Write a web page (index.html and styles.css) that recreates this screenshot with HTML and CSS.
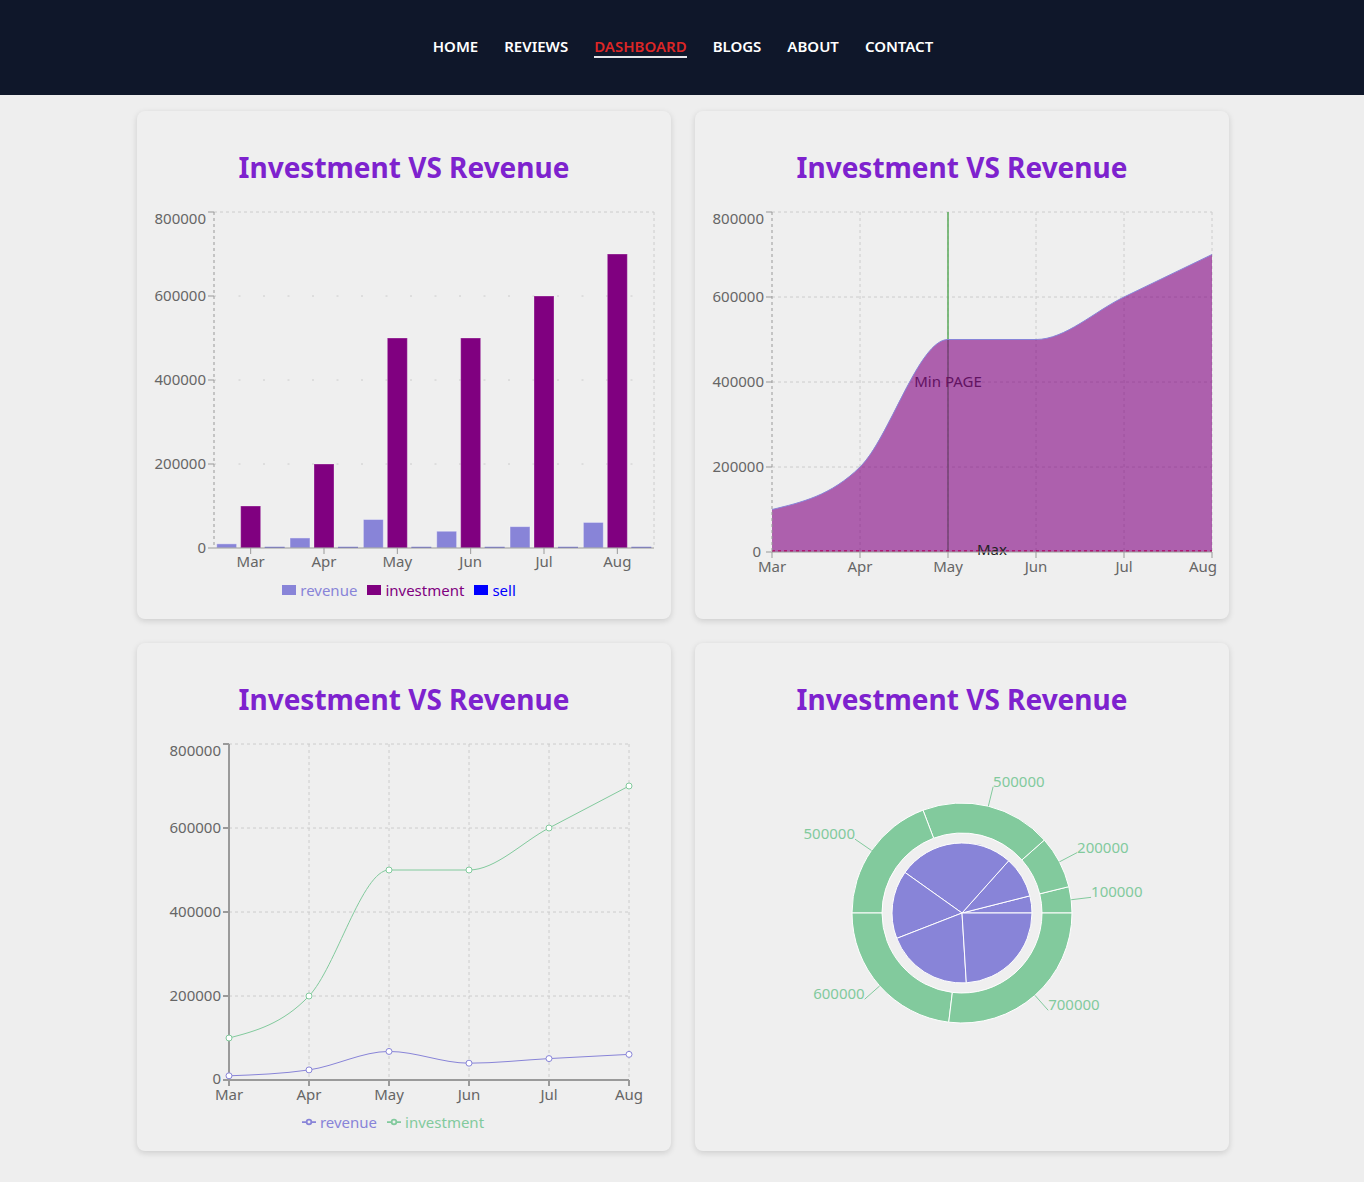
FILE: index.html
```html
<!DOCTYPE html>
<html lang="en">
<head>
<meta charset="utf-8">
<title>Dashboard</title>
<link rel="stylesheet" href="styles.css">
</head>
<body>
<header class="header">
  <nav class="nav">
    <a class="nav-link" href="#">HOME</a>
    <a class="nav-link" href="#">REVIEWS</a>
    <a class="nav-link active" href="#">DASHBOARD</a>
    <a class="nav-link" href="#">BLOGS</a>
    <a class="nav-link" href="#">ABOUT</a>
    <a class="nav-link" href="#">CONTACT</a>
  </nav>
</header>

<main class="grid">
  <!-- Bar chart -->
  <section class="card">
    <h2 class="card-title">Investment VS Revenue</h2>
    <svg class="chart" width="534" height="388" viewBox="0 0 534 388">
      <g class="grid-lines">
        <line x1="77" y1="25" x2="517" y2="25"/>
        <line class="sparse" x1="77" y1="109" x2="517" y2="109"/>
        <line class="sparse" x1="77" y1="193" x2="517" y2="193"/>
        <line class="sparse" x1="77" y1="277" x2="517" y2="277"/>
        <line x1="517" y1="25" x2="517" y2="361"/>
      </g>
      <g class="bars-rev">
        <rect x="79.67" y="356.8" width="20" height="4.2"/>
        <rect x="153" y="350.92" width="20" height="10.08"/>
        <rect x="226.33" y="332.44" width="20" height="28.56"/>
        <rect x="299.67" y="344.2" width="20" height="16.8"/>
        <rect x="373" y="339.58" width="20" height="21.42"/>
        <rect x="446.33" y="335.38" width="20" height="25.62"/>
      </g>
      <g class="bars-inv">
        <rect x="103.67" y="319" width="20" height="42"/>
        <rect x="177" y="277" width="20" height="84"/>
        <rect x="250.33" y="151" width="20" height="210"/>
        <rect x="323.67" y="151" width="20" height="210"/>
        <rect x="397" y="109" width="20" height="252"/>
        <rect x="470.33" y="67" width="20" height="294"/>
      </g>
      <g class="bars-sell">
        <rect x="127.67" y="359.8" width="20" height="1.2"/>
        <rect x="201" y="359.8" width="20" height="1.2"/>
        <rect x="274.33" y="359.8" width="20" height="1.2"/>
        <rect x="347.67" y="359.8" width="20" height="1.2"/>
        <rect x="421" y="359.8" width="20" height="1.2"/>
        <rect x="494.33" y="359.8" width="20" height="1.2"/>
      </g>
      <g class="axis">
        <line class="dashed" x1="77" y1="25" x2="77" y2="361"/>
        <line x1="71" y1="25" x2="77" y2="25"/>
        <line x1="71" y1="109" x2="77" y2="109"/>
        <line x1="71" y1="193" x2="77" y2="193"/>
        <line x1="71" y1="277" x2="77" y2="277"/>
        <line x1="71" y1="361" x2="77" y2="361"/>
        <line x1="77" y1="361" x2="517" y2="361"/>
        <line x1="113.67" y1="361" x2="113.67" y2="367"/>
        <line x1="187" y1="361" x2="187" y2="367"/>
        <line x1="260.33" y1="361" x2="260.33" y2="367"/>
        <line x1="333.67" y1="361" x2="333.67" y2="367"/>
        <line x1="407" y1="361" x2="407" y2="367"/>
        <line x1="480.33" y1="361" x2="480.33" y2="367"/>
      </g>
      <g class="ticks-y">
        <text x="69" y="37">800000</text>
        <text x="69" y="114">600000</text>
        <text x="69" y="198">400000</text>
        <text x="69" y="282">200000</text>
        <text x="69" y="366">0</text>
      </g>
      <g class="ticks-x">
        <text x="113.67" y="380">Mar</text>
        <text x="187" y="380">Apr</text>
        <text x="260.33" y="380">May</text>
        <text x="333.67" y="380">Jun</text>
        <text x="407" y="380">Jul</text>
        <text x="480.33" y="380">Aug</text>
      </g>
    </svg>
    <div class="legend legend-bar">
      <span class="legend-item rev"><span class="swatch"></span>revenue</span>
      <span class="legend-item inv"><span class="swatch"></span>investment</span>
      <span class="legend-item sell"><span class="swatch"></span>sell</span>
    </div>
  </section>

  <!-- Area chart -->
  <section class="card">
    <h2 class="card-title">Investment VS Revenue</h2>
    <svg class="chart" width="534" height="432" viewBox="0 0 534 432">
      <g class="grid-lines">
        <line x1="77" y1="25" x2="517" y2="25"/>
        <line x1="77" y1="110" x2="517" y2="110"/>
        <line x1="77" y1="195" x2="517" y2="195"/>
        <line x1="77" y1="280" x2="517" y2="280"/>
        <line x1="165" y1="25" x2="165" y2="365"/>
        <line x1="253" y1="25" x2="253" y2="365"/>
        <line x1="341" y1="25" x2="341" y2="365"/>
        <line x1="429" y1="25" x2="429" y2="365"/>
        <line x1="517" y1="25" x2="517" y2="365"/>
      </g>
      <line class="ref-x" x1="253" y1="25" x2="253" y2="365"/>
      <line class="ref-y" x1="77" y1="364" x2="517" y2="364"/>
      <text class="ref-label" x="253" y="200">Min PAGE</text>
      <path class="area-fill" d="M77,322.5C106.33,315.42,135.67,308.83,165,280C194.33,251.67,223.67,152.5,253,152.5C282.33,152.5,311.67,152.5,341,152.5C370.33,152.5,399.67,124.17,429,110C458.33,95.83,487.67,81.67,517,67.5L517,365L77,365Z"/>
      <path class="area-line" d="M77,322.5C106.33,315.42,135.67,308.83,165,280C194.33,251.67,223.67,152.5,253,152.5C282.33,152.5,311.67,152.5,341,152.5C370.33,152.5,399.67,124.17,429,110C458.33,95.83,487.67,81.67,517,67.5"/>
      <text class="ref-label max" x="297" y="368">Max</text>
      <g class="axis">
        <line class="dashed" x1="77" y1="25" x2="77" y2="365"/>
        <line x1="71" y1="25" x2="77" y2="25"/>
        <line x1="71" y1="110" x2="77" y2="110"/>
        <line x1="71" y1="195" x2="77" y2="195"/>
        <line x1="71" y1="280" x2="77" y2="280"/>
        <line x1="71" y1="365" x2="77" y2="365"/>
        <line x1="77" y1="365" x2="517" y2="365"/>
        <line x1="77" y1="365" x2="77" y2="371"/>
        <line x1="165" y1="365" x2="165" y2="371"/>
        <line x1="253" y1="365" x2="253" y2="371"/>
        <line x1="341" y1="365" x2="341" y2="371"/>
        <line x1="429" y1="365" x2="429" y2="371"/>
        <line x1="517" y1="365" x2="517" y2="371"/>
      </g>
      <g class="ticks-y">
        <text x="69" y="37">800000</text>
        <text x="69" y="115">600000</text>
        <text x="69" y="200">400000</text>
        <text x="69" y="285">200000</text>
        <text x="66" y="370">0</text>
      </g>
      <g class="ticks-x">
        <text x="77" y="385">Mar</text>
        <text x="165" y="385">Apr</text>
        <text x="253" y="385">May</text>
        <text x="341" y="385">Jun</text>
        <text x="429" y="385">Jul</text>
        <text class="end" x="522" y="385">Aug</text>
      </g>
    </svg>
  </section>

  <!-- Line chart -->
  <section class="card">
    <h2 class="card-title">Investment VS Revenue</h2>
    <svg class="chart" width="534" height="388" viewBox="0 0 534 388">
      <g class="grid-lines">
        <line x1="92" y1="25" x2="492" y2="25"/>
        <line x1="92" y1="109" x2="492" y2="109"/>
        <line x1="92" y1="193" x2="492" y2="193"/>
        <line x1="92" y1="277" x2="492" y2="277"/>
        <line x1="172" y1="25" x2="172" y2="361"/>
        <line x1="252" y1="25" x2="252" y2="361"/>
        <line x1="332" y1="25" x2="332" y2="361"/>
        <line x1="412" y1="25" x2="412" y2="361"/>
        <line x1="492" y1="25" x2="492" y2="361"/>
      </g>
      <g class="axis thick">
        <line x1="92" y1="25" x2="92" y2="361"/>
        <line x1="86" y1="25" x2="92" y2="25"/>
        <line x1="86" y1="109" x2="92" y2="109"/>
        <line x1="86" y1="193" x2="92" y2="193"/>
        <line x1="86" y1="277" x2="92" y2="277"/>
        <line x1="86" y1="361" x2="92" y2="361"/>
        <line x1="92" y1="361" x2="492" y2="361"/>
        <line x1="92" y1="361" x2="92" y2="367"/>
        <line x1="172" y1="361" x2="172" y2="367"/>
        <line x1="252" y1="361" x2="252" y2="367"/>
        <line x1="332" y1="361" x2="332" y2="367"/>
        <line x1="412" y1="361" x2="412" y2="367"/>
        <line x1="492" y1="361" x2="492" y2="367"/>
      </g>
      <g class="ticks-y">
        <text x="84" y="37">800000</text>
        <text x="84" y="114">600000</text>
        <text x="84" y="198">400000</text>
        <text x="84" y="282">200000</text>
        <text x="84" y="365">0</text>
      </g>
      <g class="ticks-x">
        <text x="92" y="381">Mar</text>
        <text x="172" y="381">Apr</text>
        <text x="252" y="381">May</text>
        <text x="332" y="381">Jun</text>
        <text x="412" y="381">Jul</text>
        <text x="492" y="381">Aug</text>
      </g>
      <path class="line-rev" d="M92,356.8C118.67,355.82,145.33,354.84,172,350.92C198.67,347,225.33,332.44,252,332.44C278.67,332.44,305.33,344.2,332,344.2C358.67,344.2,385.33,341.05,412,339.58C438.67,338.11,465.33,336.75,492,335.38"/>
      <path class="line-inv" d="M92,319C118.67,312,145.33,305,172,277C198.67,249,225.33,151,252,151C278.67,151,305.33,151,332,151C358.67,151,385.33,123,412,109C438.67,95,465.33,81,492,67"/>
      <g class="dots-rev">
        <circle cx="92" cy="356.8" r="3"/>
        <circle cx="172" cy="350.92" r="3"/>
        <circle cx="252" cy="332.44" r="3"/>
        <circle cx="332" cy="344.2" r="3"/>
        <circle cx="412" cy="339.58" r="3"/>
        <circle cx="492" cy="335.38" r="3"/>
      </g>
      <g class="dots-inv">
        <circle cx="92" cy="319" r="3"/>
        <circle cx="172" cy="277" r="3"/>
        <circle cx="252" cy="151" r="3"/>
        <circle cx="332" cy="151" r="3"/>
        <circle cx="412" cy="109" r="3"/>
        <circle cx="492" cy="67" r="3"/>
      </g>
    </svg>
    <div class="legend legend-line">
      <span class="legend-item rev"><svg class="line-icon" width="14" height="14" viewBox="0 0 32 32"><path d="M0,16h10.667A5.333,5.333,0,1,1,21.333,16H32M21.333,16A5.333,5.333,0,1,1,10.667,16"/></svg>revenue</span>
      <span class="legend-item inv2"><svg class="line-icon" width="14" height="14" viewBox="0 0 32 32"><path d="M0,16h10.667A5.333,5.333,0,1,1,21.333,16H32M21.333,16A5.333,5.333,0,1,1,10.667,16"/></svg>investment</span>
    </div>
  </section>

  <!-- Pie chart -->
  <section class="card">
    <h2 class="card-title">Investment VS Revenue</h2>
    <svg class="chart" width="534" height="432" viewBox="0 0 534 432">
      <g class="pie-inner">
        <path d="M267,194L337,194A70,70,0,0,0,334.87,176.86Z"/>
        <path d="M267,194L334.87,176.86A70,70,0,0,0,313.66,141.81Z"/>
        <path d="M267,194L313.66,141.81A70,70,0,0,0,209.96,153.42Z"/>
        <path d="M267,194L209.96,153.42A70,70,0,0,0,201.77,219.38Z"/>
        <path d="M267,194L201.77,219.38A70,70,0,0,0,271.32,263.87Z"/>
        <path d="M267,194L271.32,263.87A70,70,0,0,0,337,194Z"/>
      </g>
      <g class="pie-outer">
        <path d="M377,194A110,110,0,0,0,373.8,167.67L344.68,174.85A80,80,0,0,1,347,194Z"/>
        <path d="M373.8,167.67A110,110,0,0,0,349.34,121.06L326.88,140.95A80,80,0,0,1,344.68,174.85Z"/>
        <path d="M349.34,121.06A110,110,0,0,0,227.99,91.15L238.63,119.2A80,80,0,0,1,326.88,140.95Z"/>
        <path d="M227.99,91.15A110,110,0,0,0,157,194L187,194A80,80,0,0,1,238.63,119.2Z"/>
        <path d="M157,194A110,110,0,0,0,253.74,303.2L257.36,273.42A80,80,0,0,1,187,194Z"/>
        <path d="M253.74,303.2A110,110,0,0,0,377,194L347,194A80,80,0,0,1,257.36,273.42Z"/>
      </g>
      <g class="pie-label-lines">
        <line x1="376.2" y1="180.74" x2="396.05" y2="178.33"/>
        <line x1="364.4" y1="142.88" x2="382.11" y2="133.59"/>
        <line x1="293.33" y1="87.2" x2="298.11" y2="67.78"/>
        <line x1="176.47" y1="131.51" x2="160.01" y2="120.15"/>
        <line x1="184.66" y1="266.94" x2="169.69" y2="280.21"/>
        <line x1="339.94" y1="276.34" x2="353.21" y2="291.31"/>
      </g>
      <g class="pie-labels">
        <text x="396.05" y="178.33">100000</text>
        <text x="382.11" y="133.59">200000</text>
        <text x="298.11" y="67.78">500000</text>
        <text class="end" x="160.01" y="120.15">500000</text>
        <text class="end" x="169.69" y="280.21">600000</text>
        <text x="353.21" y="291.31">700000</text>
      </g>
    </svg>
  </section>
</main>
</body>
</html>
```

FILE: styles.css
```css
* { box-sizing: border-box; }

html, body {
  margin: 0;
  padding: 0;
}

body {
  background: #eeeeee;
  font-family: "Noto Sans", "Open Sans", sans-serif;
  color: #333;
}

.header {
  height: 95px;
  background: #0f172a;
}

.nav {
  display: flex;
  justify-content: center;
  gap: 26px;
  padding-top: 36px;
  padding-left: 2px;
}

.nav-link {
  display: block;
  color: #ffffff;
  text-decoration: none;
  font-size: 15px;
  font-weight: 600;
  line-height: 20px;
  border-bottom: 2px solid transparent;
}

.nav-link.active {
  color: #dc2626;
  border-bottom-color: #e5e7eb;
}

.grid {
  display: grid;
  grid-template-columns: 534px 534px;
  gap: 24px;
  justify-content: center;
  padding: 16px 0 24px 2px;
}

.card {
  width: 534px;
  height: 508px;
  background: #efefef;
  border-radius: 8px;
  box-shadow: 0 2px 6px rgba(0, 0, 0, 0.14);
  overflow: hidden;
}

.card-title {
  margin: 0;
  padding-top: 36px;
  line-height: 40px;
  font-size: 28px;
  font-weight: 700;
  color: #7e22ce;
  text-align: center;
}

.chart {
  display: block;
}

.chart text {
  font-family: "Noto Sans", "Open Sans", sans-serif;
  font-size: 15px;
  fill: #666666;
}

.grid-lines line {
  stroke: #cccccc;
  stroke-dasharray: 3 3;
  stroke-width: 1;
}

.grid-lines line.sparse {
  stroke-dasharray: 2 22.5;
}

.axis line {
  stroke: #999999;
  stroke-width: 1;
}

.axis line.dashed {
  stroke-dasharray: 3 3;
}

.axis.thick line {
  stroke: #9a9a9a;
  stroke-width: 2;
}

.ticks-y text {
  text-anchor: end;
}

.ticks-x text {
  text-anchor: middle;
}

.ticks-x text.end {
  text-anchor: end;
}

.bars-rev rect {
  fill: #8884d8;
  stroke: rgba(255, 255, 255, 0.45);
  stroke-width: 1;
}

.bars-inv rect {
  fill: #800080;
  stroke: rgba(255, 255, 255, 0.3);
  stroke-width: 1;
}

.bars-sell rect {
  fill: #6b6bd6;
}

.ref-x {
  stroke: #5aaa5a;
  stroke-width: 1.5;
}

.ref-y {
  stroke: #ff0033;
  stroke-dasharray: 3 3;
  stroke-width: 1.5;
}

.chart text.ref-label {
  fill: #333333;
  text-anchor: middle;
}

.chart text.ref-label.max {
  fill: #222222;
}

.area-fill {
  fill: #800080;
  fill-opacity: 0.6;
  stroke: none;
}

.area-line {
  fill: none;
  stroke: #8884d8;
  stroke-width: 1;
}

.line-rev {
  fill: none;
  stroke: #8884d8;
  stroke-width: 1;
}

.line-inv {
  fill: none;
  stroke: #82ca9d;
  stroke-width: 1;
}

.dots-rev circle {
  fill: #ffffff;
  stroke: #8884d8;
  stroke-width: 1;
}

.dots-inv circle {
  fill: #ffffff;
  stroke: #82ca9d;
  stroke-width: 1;
}

.pie-inner path {
  fill: #8884d8;
  stroke: #ffffff;
  stroke-width: 1;
}

.pie-outer path {
  fill: #82ca9d;
  stroke: #ffffff;
  stroke-width: 1;
}

.pie-label-lines line {
  stroke: #82ca9d;
  stroke-width: 1;
}

.chart .pie-labels text {
  fill: #82ca9d;
  text-anchor: start;
}

.chart .pie-labels text.end {
  text-anchor: end;
}

.legend {
  display: flex;
  justify-content: center;
  gap: 10px;
  margin-top: 5px;
  font-size: 15px;
  line-height: 20px;
}

.legend-bar {
  padding-right: 10px;
}

.legend-line {
  padding-right: 22px;
}

.legend-item {
  display: inline-flex;
  align-items: center;
  gap: 4px;
}

.swatch {
  display: inline-block;
  width: 14px;
  height: 10.5px;
}

.legend-item.rev { color: #8884d8; }
.legend-item.rev .swatch { background: #8884d8; }
.legend-item.inv { color: #800080; }
.legend-item.inv .swatch { background: #800080; }
.legend-item.sell { color: #0000ff; }
.legend-item.sell .swatch { background: #0000ff; }
.legend-item.inv2 { color: #82ca9d; }

.line-icon {
  display: block;
  fill: none;
  stroke-width: 4;
}

.legend-item.rev .line-icon { stroke: #8884d8; }
.legend-item.inv2 .line-icon { stroke: #82ca9d; }
```
